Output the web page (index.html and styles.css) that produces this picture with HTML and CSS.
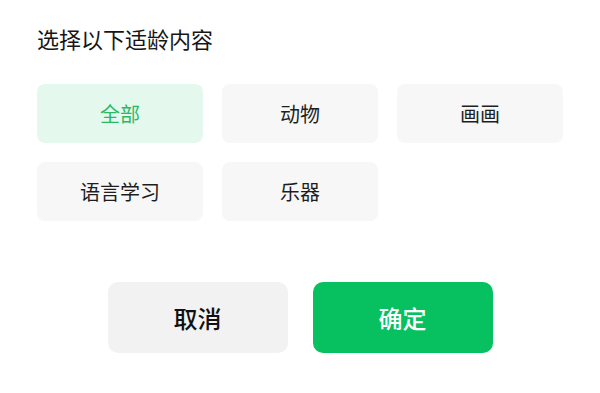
FILE: index.html
```html
<!DOCTYPE html>
<html lang="zh-CN">
<head>
<meta charset="utf-8">
<link rel="stylesheet" href="styles.css">
</head>
<body>
<div class="sheet">
  <h1 class="title">选择以下适龄内容</h1>
  <div class="chips">
    <div class="chip selected">全部</div>
    <div class="chip">动物</div>
    <div class="chip">画画</div>
    <div class="chip">语言学习</div>
    <div class="chip">乐器</div>
  </div>
  <div class="actions">
    <button class="btn cancel">取消</button>
    <button class="btn confirm">确定</button>
  </div>
</div>
</body>
</html>
```
FILE: styles.css
```css
html, body {
  margin: 0;
  padding: 0;
  background: #ffffff;
}
body {
  width: 600px;
  height: 393px;
  overflow: hidden;
  font-family: "Noto Sans CJK SC", "Noto Sans", sans-serif;
}
.sheet {
  padding: 25px 37px 0 37px;
}
.title {
  margin: 0;
  font-size: 22px;
  line-height: 26px;
  font-weight: 400;
  color: #161616;
}
.chips {
  margin-top: 33px;
  display: grid;
  grid-template-columns: 166px 156px 166px;
  column-gap: 19px;
  row-gap: 19px;
}
.chip {
  height: 59px;
  border-radius: 8px;
  background: #f7f7f7;
  color: #1e1e1e;
  font-size: 20px;
  display: flex;
  align-items: center;
  justify-content: center;
}
.chip.selected {
  background: #e5f8ed;
  color: #2bb866;
}
.actions {
  margin-top: 61px;
  display: flex;
  justify-content: center;
  gap: 25px;
}
.btn {
  width: 180px;
  height: 71px;
  border: none;
  border-radius: 10px;
  font-family: "Noto Sans CJK SC", "Noto Sans", sans-serif;
  font-size: 24px;
  font-weight: 500;
  padding: 0;
}
.cancel {
  background: #f2f2f2;
  color: #111111;
}
.confirm {
  background: #07c160;
  color: #ffffff;
}
```
